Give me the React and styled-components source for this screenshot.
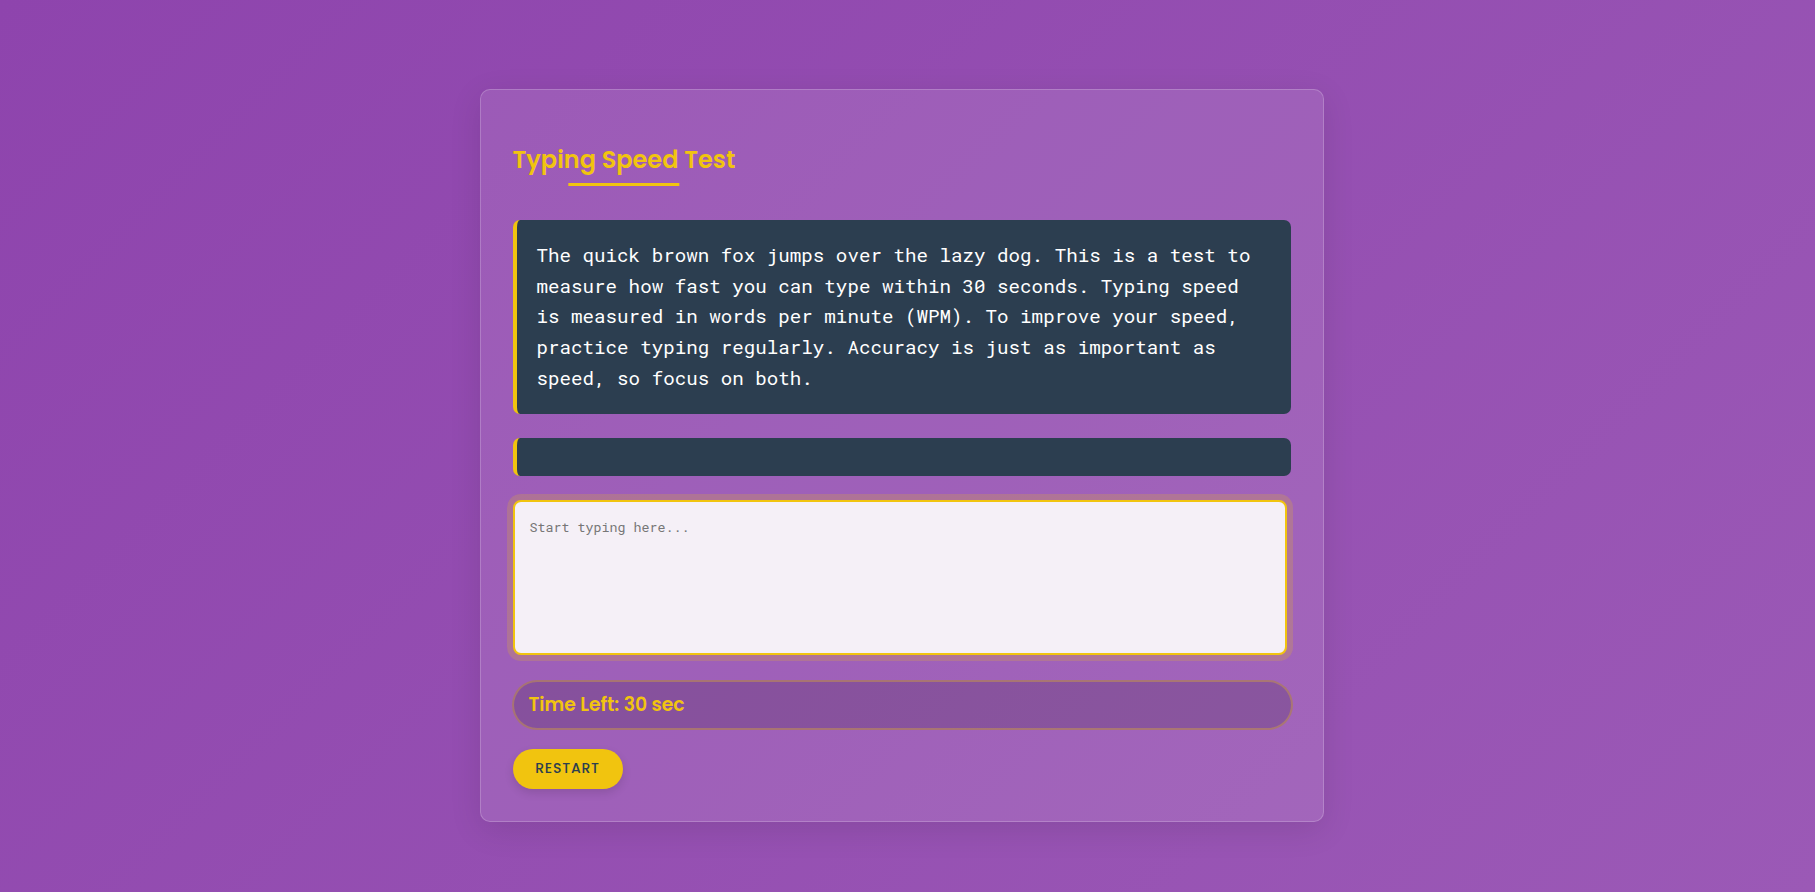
import React, { useState, useEffect, useRef } from "react";
import styled, { createGlobalStyle } from "styled-components";

const GlobalStyle = createGlobalStyle`
  html, body { margin: 0; padding: 0; }
  body {
    background: linear-gradient(135deg, #8e44ad, #9b59b6);
    min-height: 892px;
    font-family: "Poppins", "Open Sans", "Noto Sans", sans-serif;
  }
`;

const Page = styled.div`
  min-height: 892px;
  box-sizing: border-box;
  display: flex;
  justify-content: center;
  align-items: flex-start;
  padding: 89px 12px 0 0;
`;

const Card = styled.div`
  width: 844px;
  box-sizing: border-box;
  padding: 32px;
  background: rgba(255, 255, 255, 0.1);
  border: 1px solid rgba(255, 255, 255, 0.2);
  border-radius: 10px;
  box-shadow: 0 8px 32px rgba(0, 0, 0, 0.1);
  display: flex;
  flex-direction: column;
  align-items: stretch;
`;

const Title = styled.h1`
  position: relative;
  align-self: flex-start;
  margin: 20px 0 42px;
  font-family: "Poppins", "Open Sans", sans-serif;
  font-size: 24px;
  line-height: 36px;
  font-weight: 600;
  color: #f1c40f;
  &::after {
    content: "";
    position: absolute;
    left: 50%;
    transform: translateX(-50%);
    top: calc(100% + 5px);
    width: 50%;
    height: 3px;
    background: #f1c40f;
  }
`;

const TextBox = styled.div`
  background: #2c3e50;
  color: #ffffff;
  border-left: 4px solid #f1c40f;
  border-radius: 7px;
  padding: ${(p) => (p.$empty ? "0 20px" : "20px")};
  min-height: ${(p) => (p.$empty ? "38px" : "0")};
  box-sizing: border-box;
  margin-bottom: 24px;
  font-family: "Roboto Mono", "DejaVu Sans Mono", monospace;
  font-size: 19.2px;
  line-height: 1.6;
  white-space: pre-wrap;
  word-break: normal;
`;

const Input = styled.textarea`
  display: block;
  width: calc(100% - 4px);
  height: 155px;
  box-sizing: border-box;
  margin: 0 0 25px;
  padding: 16px 15px;
  border: 2px solid #f1c40f;
  border-radius: 8px;
  background: #f5f0f7;
  box-shadow: 0 0 0 6px rgba(241, 196, 15, 0.2);
  outline: none;
  resize: none;
  font-family: "Roboto Mono", "DejaVu Sans Mono", monospace;
  font-size: 13.33px;
  color: #2c3e50;
  &::placeholder {
    color: #777777;
  }
`;

const Timer = styled.div`
  margin: 0 -2px 19px -1px;
  padding: 12px 15px;
  border: 2px solid rgba(241, 196, 15, 0.3);
  border-radius: 25px;
  background: rgba(0, 0, 0, 0.15);
  font-family: "Poppins", "Open Sans", sans-serif;
  font-weight: 600;
  font-size: 18.8px;
  line-height: 22px;
  color: #f1c40f;
`;

const Button = styled.button`
  align-self: flex-start;
  width: 110px;
  height: 40px;
  border: none;
  border-radius: 20px;
  background: #f1c40f;
  color: #2c3e50;
  font-family: "Poppins", "Open Sans", sans-serif;
  font-weight: 500;
  font-size: 14px;
  letter-spacing: 0.8px;
  text-transform: uppercase;
  cursor: pointer;
  box-shadow: 0 4px 10px rgba(0, 0, 0, 0.12);
`;

const SAMPLE =
  "The quick brown fox jumps over the lazy dog. This is a test to measure how fast you can type within 30 seconds. Typing speed is measured in words per minute (WPM). To improve your speed, practice typing regularly. Accuracy is just as important as speed, so focus on both.";

export default function App() {
  const [typed, setTyped] = useState("");
  const [time, setTime] = useState(30);
  const [running, setRunning] = useState(false);
  const timer = useRef(null);

  useEffect(() => {
    if (!running) return;
    timer.current = setInterval(() => {
      setTime((t) => {
        if (t <= 1) {
          clearInterval(timer.current);
          setRunning(false);
          return 0;
        }
        return t - 1;
      });
    }, 1000);
    return () => clearInterval(timer.current);
  }, [running]);

  const onChange = (e) => {
    if (time === 0) return;
    if (!running) setRunning(true);
    setTyped(e.target.value);
  };

  const restart = () => {
    clearInterval(timer.current);
    setRunning(false);
    setTyped("");
    setTime(30);
  };

  return (
    <>
      <GlobalStyle />
      <Page>
        <Card>
          <Title>Typing Speed Test</Title>
          <TextBox>{SAMPLE}</TextBox>
          <TextBox $empty={!typed}>{typed}</TextBox>
          <Input
            placeholder="Start typing here..."
            value={typed}
            onChange={onChange}
          />
          <Timer>Time Left: {time} sec</Timer>
          <Button onClick={restart}>Restart</Button>
        </Card>
      </Page>
    </>
  );
}
